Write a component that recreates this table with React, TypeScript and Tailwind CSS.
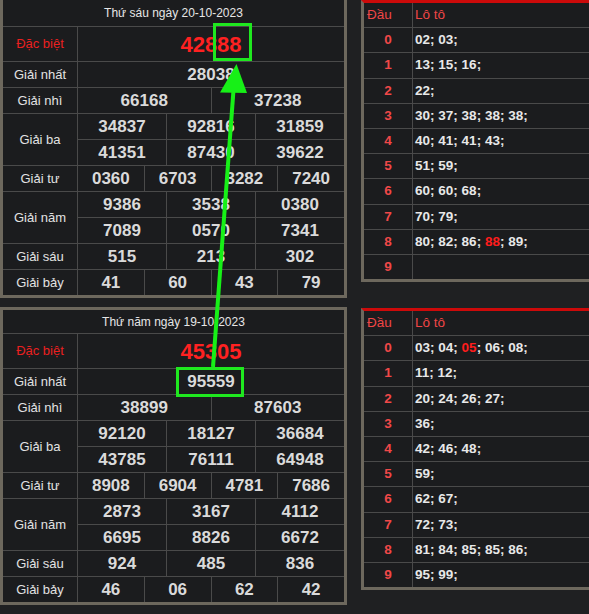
import React from 'react';

/**
 * Kết quả xổ số hai ngày liên tiếp, kèm bảng lô tô và mũi tên đánh dấu.
 */

interface Draw {
  title: string;
  db: string;
  g1: string[];
  g2: string[];
  g3: string[];
  g4: string[];
  g5: string[];
  g6: string[];
  g7: string[];
}

const dayTop: Draw = {
  title: 'Thứ sáu ngày 20-10-2023',
  db: '42888',
  g1: ['28038'],
  g2: ['66168', '37238'],
  g3: ['34837', '92816', '31859', '41351', '87430', '39622'],
  g4: ['0360', '6703', '3282', '7240'],
  g5: ['9386', '3538', '0380', '7089', '0570', '7341'],
  g6: ['515', '213', '302'],
  g7: ['41', '60', '43', '79'],
};

const dayBottom: Draw = {
  title: 'Thứ năm ngày 19-10-2023',
  db: '45305',
  g1: ['95559'],
  g2: ['38899', '87603'],
  g3: ['92120', '18127', '36684', '43785', '76111', '64948'],
  g4: ['8908', '6904', '4781', '7686'],
  g5: ['2873', '3167', '4112', '6695', '8826', '6672'],
  g6: ['924', '485', '836'],
  g7: ['46', '06', '62', '42'],
};

// '*' marks the number that matches the special prize
const lotoTop: string[][] = [
  ['02', '03'],
  ['13', '15', '16'],
  ['22'],
  ['30', '37', '38', '38', '38'],
  ['40', '41', '41', '43'],
  ['51', '59'],
  ['60', '60', '68'],
  ['70', '79'],
  ['80', '82', '86', '*88', '89'],
  [],
];

const lotoBottom: string[][] = [
  ['03', '04', '*05', '06', '08'],
  ['11', '12'],
  ['20', '24', '26', '27'],
  ['36'],
  ['42', '46', '48'],
  ['59'],
  ['62', '67'],
  ['72', '73'],
  ['81', '84', '85', '85', '86'],
  ['95', '99'],
];

const cell = 'bg-[#1b1c1e] flex items-center justify-center';
const num = 'text-[17px] font-bold text-[#dadada]';
const label = 'text-[13px] text-[#e2e2e2]';

function Label({ children, rows }: { children: React.ReactNode; rows?: 2 }) {
  return (
    <div className={`${cell} ${label} ${rows === 2 ? 'row-span-2' : 'h-[25px]'}`}>
      {children}
    </div>
  );
}

function Values({ items, span }: { items: string[]; span: 3 | 4 | 6 | 12 }) {
  const spanClass =
    span === 3 ? 'col-span-3' : span === 4 ? 'col-span-4' : span === 6 ? 'col-span-6' : 'col-span-12';
  return (
    <>
      {items.map((v, i) => (
        <div key={i} className={`${cell} ${num} ${spanClass} h-[25px]`}>
          {v}
        </div>
      ))}
    </>
  );
}

function ResultTable({ draw, first }: { draw: Draw; first?: boolean }) {
  return (
    <div
      className={`w-[347px] shrink-0 border-x-[3px] border-b-[3px] border-[#6d685d] ${
        first ? 'border-t-0' : 'border-t-[3px]'
      }`}
    >
      <div className="grid grid-cols-[74px_repeat(12,minmax(0,1fr))] gap-px bg-[#4a4a4a]">
        {/* Header */}
        <div
          className={`${cell} col-span-13 text-[12px] text-[#e6e6e6] ${first ? 'h-[26px]' : 'h-[23px]'}`}
        >
          {draw.title}
        </div>

        {/* Đặc biệt */}
        <div className={`${cell} h-[34px] text-[13px] text-[#ea2020]`}>Đặc biệt</div>
        <div className={`${cell} col-span-12 h-[34px] text-[22px] font-bold text-[#ff2121]`}>
          {draw.db}
        </div>

        <Label>Giải nhất</Label>
        <Values items={draw.g1} span={12} />

        <Label>Giải nhì</Label>
        <Values items={draw.g2} span={6} />

        <Label rows={2}>Giải ba</Label>
        <Values items={draw.g3} span={4} />

        <Label>Giải tư</Label>
        <Values items={draw.g4} span={3} />

        <Label rows={2}>Giải năm</Label>
        <Values items={draw.g5} span={4} />

        <Label>Giải sáu</Label>
        <Values items={draw.g6} span={4} />

        <Label>Giải bảy</Label>
        <Values items={draw.g7} span={3} />
      </div>
    </div>
  );
}

function LotoTable({ rows }: { rows: string[][] }) {
  return (
    <div className="w-[240px] border-t-[3px] border-t-[#cc0a0a] border-l-[3px] border-b-[3px] border-l-[#6d685d] border-b-[#6d685d]">
      <div className="grid grid-cols-[48px_1fr] gap-px bg-[#4a4a4a]">
        <div className="bg-[#1b1c1e] h-[24px] flex items-center pl-[3px] text-[13.5px] text-[#f04646]">
          Đầu
        </div>
        <div className="bg-[#1b1c1e] h-[24px] flex items-center pl-[2px] text-[13.5px] text-[#f04646]">
          Lô tô
        </div>
        {rows.map((nums, i) => {
          // rows are ~24.2px apart in the source, so two of them get an extra pixel
          const h = i === 1 || i === 6 ? 'h-[25px]' : 'h-[24px]';
          return (
            <React.Fragment key={i}>
              <div
                className={`bg-[#1b1c1e] ${h} flex items-center justify-center text-[13.5px] font-bold text-[#f04848]`}
              >
                {i}
              </div>
              <div
                className={`bg-[#1b1c1e] ${h} flex items-center pl-[2px] text-[13.5px] font-bold text-[#e8e8e8] whitespace-pre`}
              >
                {nums.map((n, j) => (
                  <span key={j}>
                    {n.startsWith('*') ? <span className="text-[#ff1c1c]">{n.slice(1)}</span> : n}
                    {';'}
                    {j < nums.length - 1 ? ' ' : ''}
                  </span>
                ))}
              </div>
            </React.Fragment>
          );
        })}
      </div>
    </div>
  );
}

export default function App() {
  return (
    <div className="relative w-[589px] h-[614px] overflow-hidden bg-[#1f2022] font-['Liberation_Sans',Arial,sans-serif]">
      {/* Ngày 20-10 */}
      <div className="flex items-start h-[307px]">
        <ResultTable draw={dayTop} first />
        <div className="ml-[14px] shrink-0">
          <LotoTable rows={lotoTop} />
        </div>
      </div>

      {/* Ngày 19-10 */}
      <div className="flex items-start">
        <ResultTable draw={dayBottom} />
        <div className="ml-[14px] mt-px shrink-0">
          <LotoTable rows={lotoBottom} />
        </div>
      </div>

      {/* Highlight boxes */}
      <div className="absolute left-[213px] top-[23px] w-[39px] h-[38px] border-[3px] border-[#1fe81f]" />
      <div className="absolute left-[176px] top-[367px] w-[68px] h-[30px] border-[3px] border-[#1fe81f]" />

      {/* Arrow */}
      <svg className="absolute left-0 top-0 pointer-events-none" width="589" height="614" viewBox="0 0 589 614">
        <line x1="213" y1="367" x2="233.5" y2="90" stroke="#17f017" strokeWidth="4" />
        <polygon points="236.5,64 220,92.5 247,93" fill="#17f017" />
      </svg>
    </div>
  );
}
